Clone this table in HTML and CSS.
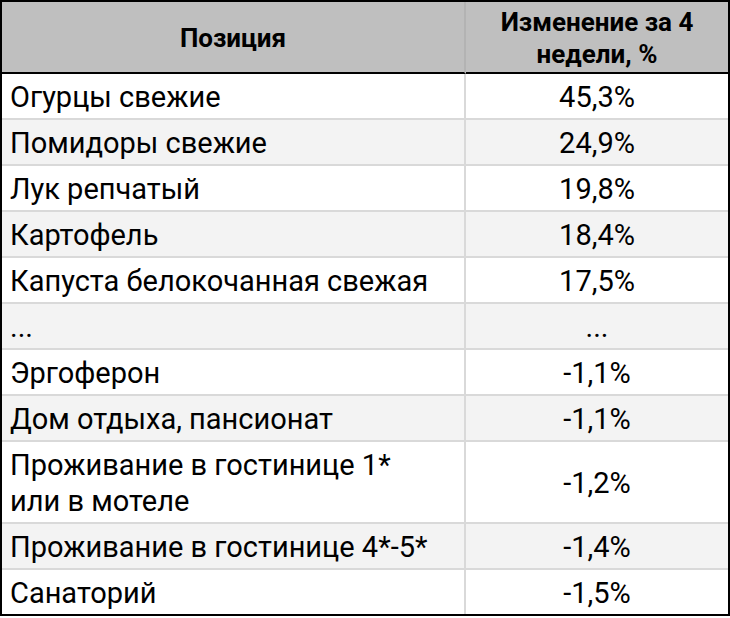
FILE: index.html
```html
<!DOCTYPE html>
<html lang="ru">
<head>
<meta charset="utf-8">
<link rel="stylesheet" href="styles.css">
</head>
<body>
<table class="tbl">
  <colgroup><col class="c-name"><col class="c-val"></colgroup>
  <thead>
    <tr><th class="name">Позиция</th><th class="val">Изменение за 4<br>недели, %</th></tr>
  </thead>
  <tbody>
    <tr><td class="name">Огурцы свежие</td><td class="val">45,3%</td></tr>
    <tr><td class="name">Помидоры свежие</td><td class="val">24,9%</td></tr>
    <tr><td class="name">Лук репчатый</td><td class="val">19,8%</td></tr>
    <tr><td class="name">Картофель</td><td class="val">18,4%</td></tr>
    <tr><td class="name">Капуста белокочанная свежая</td><td class="val">17,5%</td></tr>
    <tr><td class="name">...</td><td class="val">...</td></tr>
    <tr><td class="name">Эргоферон</td><td class="val">-1,1%</td></tr>
    <tr><td class="name">Дом отдыха, пансионат</td><td class="val">-1,1%</td></tr>
    <tr><td class="name">Проживание в гостинице 1*<br>или в мотеле</td><td class="val">-1,2%</td></tr>
    <tr><td class="name">Проживание в гостинице 4*-5*</td><td class="val">-1,4%</td></tr>
    <tr><td class="name">Санаторий</td><td class="val">-1,5%</td></tr>
  </tbody>
</table>
</body>
</html>
```
FILE: styles.css
```css
html, body {
  margin: 0;
  padding: 0;
  background: #ffffff;
}
.tbl {
  width: 730px;
  border-collapse: separate;
  border-spacing: 0;
  border: 2px solid #000;
  table-layout: fixed;
  font-family: Roboto, "Liberation Sans", sans-serif;
  color: #000;
}
.c-name { width: 464px; }
.c-val { width: 262px; }
.tbl th {
  background: #bfbfbf;
  font-weight: 700;
  font-size: 26px;
  line-height: 32px;
  height: 72px;
  padding: 2px 8px 0;
  box-sizing: border-box;
  border-bottom: 2px solid #000;
  text-align: center;
  vertical-align: middle;
}
.tbl th.name {
  border-right: 2px solid #b3b3b3;
}
.tbl td {
  font-size: 29px;
  line-height: 36px;
  padding: 5px 8px 3px;
  vertical-align: middle;
  border-bottom: 2px solid #d9d9d9;
}
.tbl tbody tr:last-child td {
  border-bottom: none;
}
.tbl td.name {
  text-align: left;
  border-right: 2px solid #d9d9d9;
}
.tbl td.val {
  text-align: center;
}
.tbl tbody tr:nth-child(even) td {
  background: #f3f3f3;
}
```
